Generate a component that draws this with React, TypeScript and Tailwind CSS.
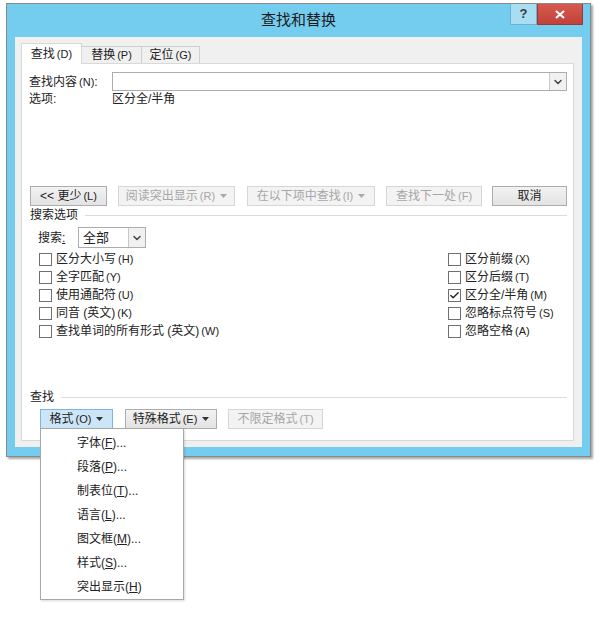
import React from 'react';
import { ChevronDown, Check } from 'lucide-react';

const FONT = '"Liberation Sans", "Noto Sans CJK SC", sans-serif';

// small mnemonic like (N)
const Key = ({ k, u }: { k: string; u?: boolean }) =>
  u ? (
    <span>(<span className="underline">{k}</span>)</span>
  ) : (
    <span className="ml-[2px] text-[11px]">({k})</span>
  );

const Caret = ({ light }: { light?: boolean }) => (
  <svg width="7" height="4" viewBox="0 0 7 4" className="ml-[5px]">
    <path d="M0 0h7L3.5 4z" fill={light ? '#a8a8a8' : '#333'} />
  </svg>
);

const Btn = ({
  children,
  w,
  disabled,
  className = '',
}: {
  children: React.ReactNode;
  w: string;
  disabled?: boolean;
  className?: string;
}) => (
  <div
    className={`${w} ${className} h-[20px] flex items-center justify-center border text-[12px] ${
      disabled
        ? 'border-[#d6d6d6] bg-[#f3f3f3] text-[#a6a6a6]'
        : 'border-[#adadad] bg-gradient-to-b from-[#f2f2f2] to-[#e3e3e3] text-[#222]'
    }`}
  >
    {children}
  </div>
);

const Box = ({ checked }: { checked?: boolean }) => (
  <div className="w-[13px] h-[13px] border border-[#707070] bg-white flex items-center justify-center">
    {checked && <Check size={11} strokeWidth={3} className="text-[#222]" />}
  </div>
);

const Opt = ({ label, k, checked }: { label: string; k: string; checked?: boolean }) => (
  <div className="h-[18px] flex items-center gap-[4px] text-[12px] text-[#222]">
    <Box checked={checked} />
    <span>
      {label}
      <Key k={k} />
    </span>
  </div>
);

const Section = ({ title, line }: { title: string; line: string }) => (
  <div className="h-[14px] flex items-center pl-[8px] pr-[6px] text-[12px] text-[#222]">
    <span>{title}</span>
    <div className={`${line} flex-1 h-px bg-[#dcdcdc]`} />
  </div>
);

const menuItems: [string, string, string][] = [
  ['字体', 'F', '...'],
  ['段落', 'P', '...'],
  ['制表位', 'T', '...'],
  ['语言', 'L', '...'],
  ['图文框', 'M', '...'],
  ['样式', 'S', '...'],
  ['突出显示', 'H', ''],
];

export default function App() {
  return (
    <div className="w-[600px] h-[618px] bg-white overflow-hidden pt-[3px]" style={{ fontFamily: FONT }}>
      {/* window */}
      <div className="ml-[6px] w-[585px] relative bg-[#74cdef] border border-[#8a8a8a] shadow-[2px_2px_2px_rgba(0,0,0,0.35)]">
        {/* title bar */}
        <div className="h-[33px] flex items-center justify-center text-[15px] text-[#1b1b1b]">查找和替换</div>
        <div className="absolute top-0 right-[7px] flex h-[21px]">
          <div className="w-[27px] bg-[#a9ddf2] border border-[#6bb3d3] border-t-0 flex items-center justify-center text-[13px] font-bold text-[#3a3a3a]">
            ?
          </div>
          <div className="w-[46px] bg-gradient-to-b from-[#d65a50] to-[#c2413a] border border-[#9c3a33] border-t-0 flex items-center justify-center">
            <svg width="10" height="9" viewBox="0 0 10 9">
              <path d="M1 1l8 7M9 1L1 8" stroke="#fff" strokeWidth="2.2" />
            </svg>
          </div>
        </div>

        {/* client area */}
        <div className="mx-[8px] mb-[9px] bg-[#f0f0f0] pt-[6px] pl-[6px] pr-[8px] pb-[6px]">
          {/* tabs */}
          <div className="h-[20px] flex items-end text-[12px] text-[#222]">
            <div className="relative z-10 w-[61px] h-[21px] -mb-px bg-white border border-[#d9d9d9] border-b-0 flex items-center justify-center">
              <span>
                查找<Key k="D" />
              </span>
            </div>
            <div className="w-[60px] h-[17px] bg-[#f0f0f0] border border-[#d0d0d0] border-b-0 border-l-0 flex items-center justify-center">
              <span>
                替换<Key k="P" />
              </span>
            </div>
            <div className="w-[58px] h-[17px] bg-[#f0f0f0] border border-[#d0d0d0] border-b-0 border-l-0 flex items-center justify-center">
              <span>
                定位<Key k="G" />
              </span>
            </div>
          </div>

          {/* panel */}
          <div className="w-[553px] h-[378px] bg-white border border-[#d9d9d9] flex flex-col text-[12px] text-[#222]">
            <div className="mt-[8px] h-[19px] flex items-center">
              <div className="w-[90px] pl-[7px]">
                查找内容<Key k="N" />:
              </div>
              <div className="w-[455px] h-[19px] border border-[#abadb3] bg-white flex justify-end">
                <div className="w-[17px] h-full border-l border-[#c8c8c8] bg-[#f1f1f1] flex items-center justify-center">
                  <ChevronDown size={12} strokeWidth={3} className="text-[#444]" />
                </div>
              </div>
            </div>
            <div className="mt-[1px] h-[14px] flex items-center">
              <div className="w-[90px] pl-[7px]">选项:</div>
              <div>区分全/半角</div>
            </div>

            {/* buttons */}
            <div className="mt-[80px] flex pl-[8px]">
              <Btn w="w-[77px]">
                &lt;&lt; 更少<Key k="L" />
              </Btn>
              <Btn w="w-[117px]" className="ml-[11px]" disabled>
                阅读突出显示<Key k="R" />
                <Caret light />
              </Btn>
              <Btn w="w-[128px]" className="ml-[12px]" disabled>
                在以下项中查找<Key k="I" />
                <Caret light />
              </Btn>
              <Btn w="w-[96px]" className="ml-[11px]" disabled>
                查找下一处<Key k="F" />
              </Btn>
              <Btn w="w-[75px]" className="ml-[10px]">
                取消
              </Btn>
            </div>

            <div className="mt-[2px]">
              <Section title="搜索选项" line="ml-[7px]" />
            </div>

            <div className="mt-[5px] h-[21px] flex items-center pl-[16px]">
              <span className="w-[40px]">
                搜索<span className="underline">:</span>
              </span>
              <div className="w-[68px] h-[21px] border border-[#abadb3] bg-white flex items-center">
                <span className="flex-1 pl-[4px] text-[13px]">全部</span>
                <div className="w-[17px] h-full border-l border-[#c8c8c8] bg-[#f1f1f1] flex items-center justify-center">
                  <ChevronDown size={12} strokeWidth={3} className="text-[#444]" />
                </div>
              </div>
            </div>

            <div className="mt-[2px] flex">
              <div className="w-[426px] pl-[17px] flex flex-col">
                <Opt label="区分大小写" k="H" />
                <Opt label="全字匹配" k="Y" />
                <Opt label="使用通配符" k="U" />
                <Opt label="同音 (英文)" k="K" />
                <Opt label="查找单词的所有形式 (英文)" k="W" />
              </div>
              <div className="flex flex-col">
                <Opt label="区分前缀" k="X" />
                <Opt label="区分后缀" k="T" />
                <Opt label="区分全/半角" k="M" checked />
                <Opt label="忽略标点符号" k="S" />
                <Opt label="忽略空格" k="A" />
              </div>
            </div>

            <div className="mt-[50px]">
              <Section title="查找" line="ml-[7px]" />
            </div>

            <div className="mt-[5px] flex pl-[18px]">
              <div className="relative">
                <div className="w-[73px] h-[20px] flex items-center justify-center border border-[#7eb4ea] bg-[#cde6f7] text-[12px] text-[#222]">
                  格式<Key k="O" />
                  <Caret />
                </div>
                {/* dropdown menu */}
                <div className="absolute left-0 top-full -mt-px z-20 w-[144px] h-[172px] bg-white border border-[#a7a7a7] shadow-[1px_1px_2px_rgba(0,0,0,0.15)] pt-[2px] pl-[36px] text-[12px] text-[#222]">
                  {menuItems.map(([t, k, s]) => (
                    <div key={k} className="h-[24px] flex items-center">
                      {t}
                      <Key k={k} u />
                      {s}
                    </div>
                  ))}
                </div>
              </div>
              <Btn w="w-[92px]" className="ml-[12px]">
                特殊格式<Key k="E" />
                <Caret />
              </Btn>
              <Btn w="w-[95px]" className="ml-[11px]" disabled>
                不限定格式<Key k="T" />
              </Btn>
            </div>
          </div>
        </div>
      </div>
    </div>
  );
}
